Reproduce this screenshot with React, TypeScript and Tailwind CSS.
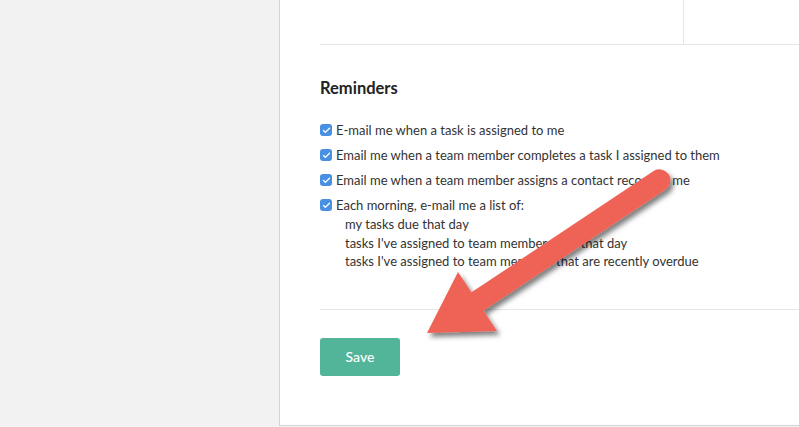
import { Check } from "lucide-react";

const reminders = [
  "E-mail me when a task is assigned to me",
  "Email me when a team member completes a task I assigned to them",
  "Email me when a team member assigns a contact record to me",
];

const dailyItems = [
  "my tasks due that day",
  "tasks I've assigned to team members due that day",
  "tasks I've assigned to team members that are recently overdue",
];

const Checkbox = () => (
  <span className="flex items-center justify-center w-[12px] h-[12px] rounded-[3px] bg-[#4a90e2] shrink-0">
    <Check className="w-[9px] h-[9px] text-white" strokeWidth={3.5} />
  </span>
);

const Arrow = () => (
  <svg className="absolute inset-0 pointer-events-none" width="799" height="427" viewBox="0 0 799 427">
    <defs>
      <filter id="arrowShadow" x="-20%" y="-20%" width="140%" height="140%">
        <feDropShadow dx="3" dy="4" stdDeviation="2.5" floodColor="#000" floodOpacity="0.5" />
      </filter>
    </defs>
    <path
      d="M427 333 L458 272 L471.5 292.3 L654 170.8 A11 11 0 0 1 666 189.2 L483.5 310.7 L497 331 Z"
      fill="#ef6456"
      filter="url(#arrowShadow)"
    />
  </svg>
);

export default function App() {
  return (
    <div className="relative flex w-[799px] h-[427px] overflow-hidden bg-[#f2f2f2] font-['Lato',sans-serif] text-[#333]">
      <div className="w-[279px] shrink-0" />
      <div className="flex-1 h-[426px] bg-white border-l border-b border-[#d4d4d4] pl-[40px]">
        <div className="flex h-[45px] border-b border-[#e6e6e6]">
          <div className="w-[364px] border-r border-[#e6e6e6]" />
        </div>

        <h2 className="mt-[33px] text-[16.5px] leading-[20px] font-bold text-[#222]">Reminders</h2>

        <div className="flex flex-col gap-[5px] mt-[22px] text-[13px] leading-[20px]">
          {reminders.map((item, index) => (
            <label key={`${item}-${index}`} className="flex items-center gap-[4px]">
              <Checkbox />
              <span>{item}</span>
            </label>
          ))}
          <div>
            <label className="flex items-center gap-[4px]">
              <Checkbox />
              <span>Each morning, e-mail me a list of:</span>
            </label>
            <div className="pl-[25px] leading-[18.5px]">
              {dailyItems.map((item) => (
                <p key={item}>{item}</p>
              ))}
            </div>
          </div>
        </div>

        <div className="mt-[38px] border-t border-[#e6e6e6]" />

        <button className="mt-[28px] w-[80px] h-[38px] rounded-[3px] bg-[#52b59a] text-white text-[14px] font-medium">
          Save
        </button>
      </div>
      <Arrow />
    </div>
  );
}
